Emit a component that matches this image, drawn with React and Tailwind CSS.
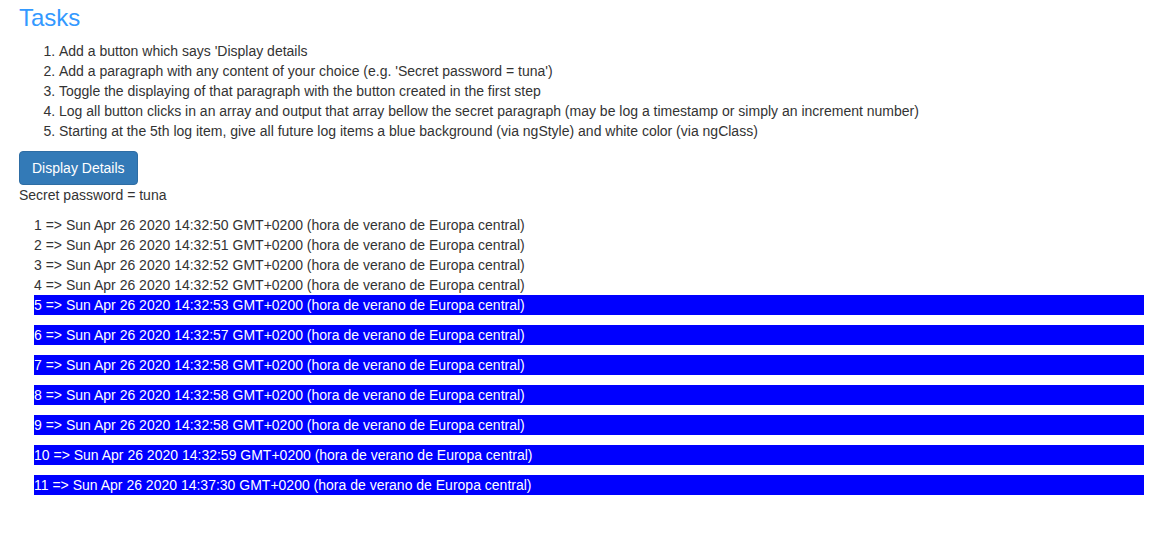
import React from 'react';

const tasks = [
  "Add a button which says 'Display details",
  "Add a paragraph with any content of your choice (e.g. 'Secret password = tuna')",
  'Toggle the displaying of that paragraph with the button created in the first step',
  'Log all button clicks in an array and output that array bellow the secret paragraph (may be log a timestamp or simply an increment number)',
  'Starting at the 5th log item, give all future log items a blue background (via ngStyle) and white color (via ngClass)',
];

const logs = [
  '14:32:50',
  '14:32:51',
  '14:32:52',
  '14:32:52',
  '14:32:53',
  '14:32:57',
  '14:32:58',
  '14:32:58',
  '14:32:58',
  '14:32:59',
  '14:37:30',
];

export default function App() {
  return (
    <div className="min-h-[537px] bg-white pl-[19px] pr-[15px] pt-[5px] font-['Liberation_Sans',Arial,sans-serif] text-[14px] leading-[20px] text-[#333]">
      <h3 className="mb-[10px] text-[24px] leading-[1.1] text-[#3399ff]">Tasks</h3>

      <ol className="mb-[10px] list-decimal pl-[40px]">
        {tasks.map((t) => (
          <li key={t}>{t}</li>
        ))}
      </ol>

      <button
        type="button"
        className="h-[34px] rounded-[4px] border border-[#2e6da4] bg-[#337ab7] px-[12px] text-[14px] leading-[20px] text-white"
      >
        Display Details
      </button>
      <p className="mb-[10px]">Secret password = tuna</p>

      <ul className="pl-[15px]">
        {logs.map((time, idx) => {
          const n = idx + 1;
          const highlighted = n >= 5;
          return (
            <li
              key={n}
              className={highlighted ? 'mb-[10px] bg-[#0000ff] text-white' : ''}
            >
              {n} =&gt; Sun Apr 26 2020 {time} GMT+0200 (hora de verano de Europa central)
            </li>
          );
        })}
      </ul>
    </div>
  );
}
